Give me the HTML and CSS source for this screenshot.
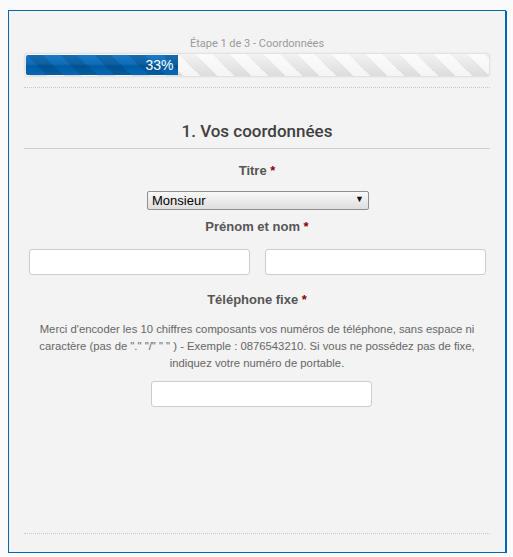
FILE: index.html
```html
<!DOCTYPE html>
<html lang="fr">
  <head>
    <meta charset="UTF-8" />
    <title>Coordonnées</title>
    <meta name="viewport" content="width=device-width, initial-scale=1.0" />
    <link rel="stylesheet" href="styles.css">
  </head>
  <body>
    <div class="wizard">
      <div class="step-title">Étape 1 de 3 - Coordonnées</div>
      <div class="progress">
        <div class="progress-bar" style="width: 33%">33%</div>
      </div>

      <form class="step-form">
        <h2>1. Vos coordonnées</h2>

        <label class="field-label">Titre <span class="req">*</span></label>
        <div class="select-wrap">
          <select class="select">
            <option>Monsieur</option>
            <option>Madame</option>
          </select>
        </div>

        <label class="field-label label-tight">Prénom et nom <span class="req">*</span></label>
        <div class="name-row">
          <input type="text" class="text-input" />
          <input type="text" class="text-input" />
        </div>

        <label class="field-label label-phone">Téléphone fixe <span class="req">*</span></label>
        <p class="help">
          Merci d'encoder les 10 chiffres composants vos numéros de téléphone, sans espace ni
          caractère (pas de "." "/" " " ) - Exemple : 0876543210. Si vous ne possédez pas de fixe,
          indiquez votre numéro de portable.
        </p>
        <div class="phone-row">
          <input type="text" class="text-input phone" />
        </div>
      </form>

      <div class="wizard-foot"></div>
    </div>
  </body>
</html>
```

FILE: styles.css
```css
body {
  margin: 10px 0 0 8px;
  background-color: #fafafa;
  font-family: 'Liberation Sans', Arial, sans-serif;
}

.wizard {
  width: 466px;
  padding: 26px 15px 18px;
  background: #f3f3f3;
  border: 1px solid #0067b3;
  box-shadow: 1px 1px 0 #0067b3;
}

.step-title {
  font-family: Roboto, sans-serif;
  font-size: 11px;
  line-height: 14px;
  color: #9a9a9a;
  text-align: center;
}

.progress {
  margin-top: 2px;
  height: 20px;
  padding: 1px;
  border: 1px solid #e2e2e2;
  border-radius: 4px;
  box-shadow: 0 0 2px rgba(0, 0, 0, 0.08);
  background-color: #ebebeb;
  background-image:
    linear-gradient(45deg, rgba(255, 255, 255, 0.7) 25%, transparent 25%, transparent 50%, rgba(255, 255, 255, 0.7) 50%, rgba(255, 255, 255, 0.7) 75%, transparent 75%),
    linear-gradient(to bottom, #f2f2f2, #dcdcdc);
  background-size: 34px 34px, 100% 100%;
}

.progress-bar {
  height: 20px;
  box-sizing: border-box;
  padding-right: 5px;
  border-radius: 2px 0 0 2px;
  color: white;
  font-size: 14px;
  line-height: 20px;
  text-align: right;
  background-color: #0a66b0;
  background-image:
    linear-gradient(45deg, rgba(0, 0, 0, 0.12) 25%, transparent 25%, transparent 50%, rgba(0, 0, 0, 0.12) 50%, rgba(0, 0, 0, 0.12) 75%, transparent 75%),
    linear-gradient(to bottom, #1b7ac6 0%, #0f6cb6 45%, #005ca4 55%, #0068b5 100%);
  background-size: 34px 34px, 100% 100%;
}

.step-form {
  margin-top: 10px;
  border-top: 1px dotted #c8c8c8;
  padding-top: 32px;
  min-height: 413px;
}

.step-form h2 {
  margin: 0 0 14px;
  padding-bottom: 6px;
  border-bottom: 1px solid #cccccc;
  font-family: Roboto, sans-serif;
  font-size: 17px;
  font-weight: 500;
  line-height: 22px;
  color: #404040;
  text-align: center;
}

.field-label {
  display: block;
  font-size: 13px;
  font-weight: bold;
  line-height: 16px;
  color: #555555;
  text-align: center;
}

.req {
  color: #8b0000;
}

.label-tight {
  margin-top: 9px;
}

.label-phone {
  margin-top: 17px;
}

.select-wrap {
  position: relative;
  width: 222px;
  margin: 12px auto 0;
  padding-left: 2px;
}

.select-wrap::after {
  content: '▼';
  position: absolute;
  right: 5px;
  top: 3px;
  font-size: 9px;
  color: #111;
  pointer-events: none;
}

.select {
  display: block;
  width: 222px;
  height: 19px;
  padding: 0 0 0 4px;
  border: 1px solid #8f8f8f;
  border-radius: 2px;
  background: linear-gradient(to bottom, #f9f9f9, #dedede);
  font-family: 'Liberation Sans', Arial, sans-serif;
  font-size: 13px;
  color: #000;
  appearance: none;
  -webkit-appearance: none;
}

.name-row {
  display: grid;
  grid-template-columns: 221px 221px;
  gap: 15px;
  margin-top: 14px;
  padding-left: 5px;
}

.text-input {
  box-sizing: border-box;
  width: 221px;
  height: 26px;
  border: 1px solid #cccccc;
  border-radius: 3px;
  background: white;
}

.help {
  margin: 13px 0 0;
  font-size: 11.3px;
  line-height: 17px;
  color: #666666;
  text-align: center;
}

.phone-row {
  display: flex;
  justify-content: center;
  margin-top: 9px;
  padding-left: 8px;
}

.wizard-foot {
  border-top: 1px dotted #c8c8c8;
}
```
